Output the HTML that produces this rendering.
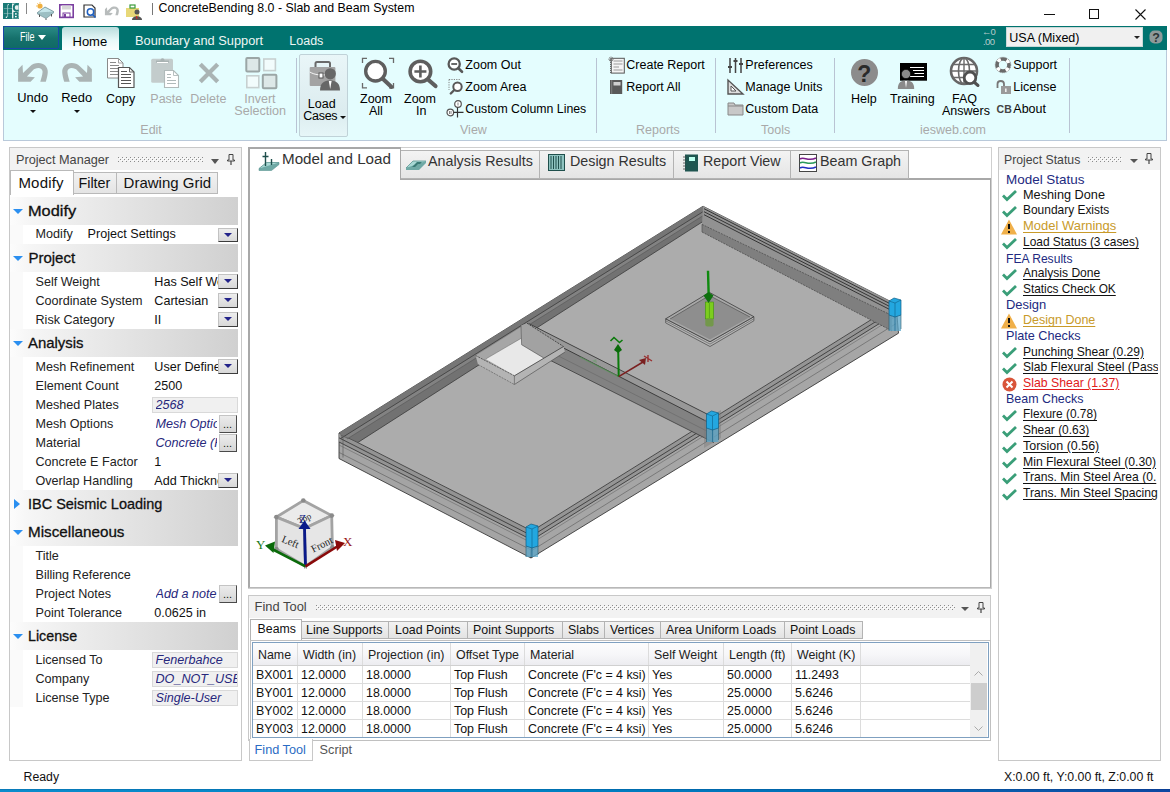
<!DOCTYPE html>
<html><head><meta charset="utf-8"><style>
html,body{margin:0;padding:0;}
body{width:1170px;height:792px;overflow:hidden;position:relative;background:#fff;font-family:"Liberation Sans",sans-serif;}
.t{position:absolute;white-space:nowrap;line-height:1;}
svg{overflow:visible}
</style></head><body>
<svg style="position:absolute;left:3px;top:3px;" width="16" height="16" viewBox="0 0 16 16"><rect x="0" y="0" width="16" height="16" fill="#1b7a77"/>
      <path d="M0.8 5.5H9M0.8 10.5H9" stroke="#8fc0bd" stroke-width="0.6"/><path d="M4.6 2V14" stroke="#b9d9d7" stroke-width="0.7"/>
      <path d="M9.5 0.5V15.5" stroke="#e6f0f0" stroke-width="1"/>
      <rect x="10" y="0.6" width="5.6" height="14.8" fill="#e8f0f0"/><path d="M15.6 1.6C13 0.4, 10.8 1.6, 10.8 4.5C10.8 7.4, 13 8.4, 15.6 7.4" fill="none" stroke="#1b7a77" stroke-width="2"/>
      <path d="M10.4 9H14.2C15.8 9, 15.8 11.8, 14.6 12C15.9 12.3, 15.8 15.4, 14.2 15.4H10.4Z" fill="#1b7a77"/><rect x="12" y="10.2" width="1.7" height="1.4" fill="#fff"/><rect x="12" y="12.9" width="1.7" height="1.4" fill="#fff"/>
      <circle cx="5.3" cy="1.6" r="0.6" fill="#fff"/><circle cx="3.4" cy="14.3" r="0.7" fill="#fff"/></svg>
<div style="position:absolute;left:26px;top:3px;width:1px;height:11px;background:#888"></div>
<svg style="position:absolute;left:36px;top:2px;" width="19" height="18" viewBox="0 0 19 18"><path d="M1.5 10.5L9 5L17.5 9.5L10 15Z" fill="#c5e6ea" stroke="#6a8a90" stroke-width="0.8"/>
      <path d="M1.5 10.5V12L10 16.5L17.5 11V9.5" fill="#9cbfc3" stroke="#6a8a90" stroke-width="0.6"/>
      <path d="M3.5 12.5V15M10 16.5V18M15.5 12V14.5" stroke="#555" stroke-width="1"/>
      <circle cx="4" cy="4" r="2.6" fill="#f0b040"/><path d="M4 0V1M0 4H1M1.3 1.3L2 2" stroke="#f0b040" stroke-width="0.8"/></svg>
<svg style="position:absolute;left:59px;top:4px;" width="15" height="14" viewBox="0 0 15 14"><rect x="0.8" y="0.8" width="13.4" height="12.6" fill="none" stroke="#7b3fa0" stroke-width="1.6"/>
      <rect x="3" y="1.5" width="9" height="4" fill="#d7d7d7"/>
      <rect x="4" y="9" width="7" height="4" fill="#fff" stroke="#7b3fa0" stroke-width="1"/><rect x="5" y="10" width="2" height="3" fill="#7b3fa0"/></svg>
<svg style="position:absolute;left:83px;top:4px;" width="14" height="14" viewBox="0 0 14 14"><path d="M1 1H9L12 4V13H1Z" fill="#fff" stroke="#333" stroke-width="1.2"/>
      <circle cx="7.5" cy="8" r="3.2" fill="none" stroke="#1f5fbf" stroke-width="1.5"/><path d="M9.5 10.5L12.5 13.5" stroke="#1f5fbf" stroke-width="1.6"/></svg>
<svg style="position:absolute;left:103px;top:4px;" width="17" height="13" viewBox="0 0 17 13"><g transform="scale(0.47)"><path d="M4.1 11.3 L8.5 6.7 L9 15 L15.9 8.5 C18.5 6, 21 5.1, 24.4 5.1 C30 5.1, 34 9, 33.8 14.1 C33.7 17, 32.8 20.5, 31.8 23.7 L26.3 23.7 C27.2 20.5, 28.4 17, 28.6 13.8 C28.6 11.5, 26.5 10.1, 24.4 10.1 C22 10.1, 20.2 11, 18.7 12.4 L12.9 18.4 L20.9 19.3 L16.6 23.7 L4.1 23.7 Z" fill="#b8bcbc"/></g></svg>
<svg style="position:absolute;left:126px;top:4px;" width="16" height="16" viewBox="0 0 16 16"><rect x="0" y="4" width="13" height="9" fill="#e8d878"/><rect x="4" y="1" width="5" height="3" fill="none" stroke="#3a9a3a" stroke-width="1.2"/>
      <circle cx="11" cy="8" r="2.5" fill="#555"/><path d="M6 16 C6 11, 16 11, 16 16Z" fill="#555"/><path d="M10.5 12 L11 15" stroke="#d22" stroke-width="1"/></svg>
<div style="position:absolute;left:152px;top:3px;width:1px;height:12px;background:#777"></div>
<div class="t" style="left:158.50px;top:2.15px;font-size:12.35px;color:#000;font-weight:400;font-style:normal;">ConcreteBending 8.0 - Slab and Beam System</div>
<div style="position:absolute;left:1044px;top:14px;width:11px;height:1px;background:#111"></div>
<div style="position:absolute;left:1089px;top:9px;width:10px;height:10px;border:1px solid #111;box-sizing:border-box"></div>
<svg style="position:absolute;left:1135px;top:9px;" width="11" height="11" viewBox="0 0 11 11"><path d="M0.5 0.5L10.5 10.5M10.5 0.5L0.5 10.5" stroke="#111" stroke-width="1.1"/></svg>
<div style="position:absolute;left:3px;top:26px;width:1164px;height:24px;background:#00736f"></div>
<div style="position:absolute;left:3px;top:26px;width:56px;height:23px;background:linear-gradient(#2a8b86,#15706b 55%,#0f6a66);border:1px solid #1a46a8;box-sizing:border-box;border-radius:2px"></div>
<div class="t" style="left:19.50px;top:31.22px;font-size:12.5px;color:#fff;font-weight:400;font-style:normal;transform:scaleX(0.72);transform-origin:left">File</div>
<svg style="position:absolute;left:38px;top:35px;" width="8" height="5" viewBox="0 0 8 5"><path d="M0 0H8L4 5Z" fill="#fff"/></svg>
<div style="position:absolute;left:62px;top:27px;width:57px;height:23px;background:linear-gradient(#b9dcdc,#eafafa 60%,#fafefe);border-radius:3px 3px 0 0"></div>
<div class="t" style="left:72.50px;top:34.60px;font-size:13px;color:#000;font-weight:400;font-style:normal;">Home</div>
<div class="t" style="left:135.00px;top:34.76px;font-size:12.8px;color:#eef6f4;font-weight:400;font-style:normal;">Boundary and Support</div>
<div class="t" style="left:289.30px;top:35.02px;font-size:12.5px;color:#eef6f4;font-weight:400;font-style:normal;">Loads</div>
<div class="t" style="left:982.00px;top:27.46px;font-size:9.5px;color:#b9cccc;font-weight:400;font-style:normal;letter-spacing:-1px">&#8592;0</div>
<div class="t" style="left:983.00px;top:36.96px;font-size:9.5px;color:#b9cccc;font-weight:400;font-style:normal;letter-spacing:-0.6px">.00</div>
<div style="position:absolute;left:1006px;top:27px;width:137px;height:20px;background:#f0f0f0;border:1px solid #c9d9d8;box-sizing:border-box"></div>
<div class="t" style="left:1009.30px;top:31.72px;font-size:12.5px;color:#000;font-weight:400;font-style:normal;">USA (Mixed)</div>
<svg style="position:absolute;left:1134px;top:36px;" width="6" height="3" viewBox="0 0 6 3"><path d="M0 0H6L3 3Z" fill="#222"/></svg>
<svg style="position:absolute;left:1149px;top:30px;" width="14" height="14" viewBox="0 0 14 14"><rect x="0.5" y="0.5" width="13" height="13" rx="5" fill="#8e9a9a"/><text x="3.2" y="11.8" font-size="12.5" font-weight="700" fill="#2a3434" font-family="Liberation Sans">?</text></svg>
<div style="position:absolute;left:3px;top:50px;width:1164px;height:91px;background:#e4fdfe;border:1px solid #b9c9da;border-top:none;box-sizing:border-box"></div>
<svg style="position:absolute;left:14px;top:58px;" width="40" height="28" viewBox="0 0 40 28"><path d="M4.1 11.3 L8.5 6.7 L9 15 L15.9 8.5 C18.5 6, 21 5.1, 24.4 5.1 C30 5.1, 34 9, 33.8 14.1 C33.7 17, 32.8 20.5, 31.8 23.7 L26.3 23.7 C27.2 20.5, 28.4 17, 28.6 13.8 C28.6 11.5, 26.5 10.1, 24.4 10.1 C22 10.1, 20.2 11, 18.7 12.4 L12.9 18.4 L20.9 19.3 L16.6 23.7 L4.1 23.7 Z" fill="#aab4b4"/></svg>
<div class="t" style="left:17.30px;top:92.28px;font-size:12.9px;color:#000;font-weight:400;font-style:normal;">Undo</div>
<svg style="position:absolute;left:30px;top:110px;" width="6" height="3" viewBox="0 0 6 3"><path d="M0 0H6L3 3Z" fill="#111"/></svg>
<svg style="position:absolute;left:58px;top:58px;" width="40" height="28" viewBox="0 0 40 28"><g transform="translate(38,0) scale(-1,1)"><path d="M4.1 11.3 L8.5 6.7 L9 15 L15.9 8.5 C18.5 6, 21 5.1, 24.4 5.1 C30 5.1, 34 9, 33.8 14.1 C33.7 17, 32.8 20.5, 31.8 23.7 L26.3 23.7 C27.2 20.5, 28.4 17, 28.6 13.8 C28.6 11.5, 26.5 10.1, 24.4 10.1 C22 10.1, 20.2 11, 18.7 12.4 L12.9 18.4 L20.9 19.3 L16.6 23.7 L4.1 23.7 Z" fill="#aab4b4"/></g></svg>
<div class="t" style="left:61.30px;top:92.28px;font-size:12.9px;color:#000;font-weight:400;font-style:normal;">Redo</div>
<svg style="position:absolute;left:74px;top:110px;" width="6" height="3" viewBox="0 0 6 3"><path d="M0 0H6L3 3Z" fill="#111"/></svg>
<svg style="position:absolute;left:107px;top:58px;" width="28" height="30" viewBox="0 0 28 30"><path d="M0.5 0.5H11.5L16 5V20H0.5Z" fill="#fff" stroke="#8a8a8a" stroke-width="1"/><path d="M11.5 0.5V5H16" fill="none" stroke="#8a8a8a" stroke-width="0.8"/>
      <path d="M3 4.5H9M3 7.5H12M3 10.5H12M3 13.5H12M3 16.5H12" stroke="#8a8a8a" stroke-width="1"/>
      <path d="M11.5 9.5H22.5L27 14V29.5H11.5Z" fill="#fff" stroke="#555" stroke-width="1.2"/><path d="M22.5 9.5V14H27" fill="none" stroke="#555" stroke-width="0.9"/>
      <path d="M14 13.5H20M14 16.5H24M14 19.5H24M14 22.5H24M14 25.5H24" stroke="#555" stroke-width="1.1"/></svg>
<div class="t" style="left:106.00px;top:92.62px;font-size:12.5px;color:#000;font-weight:400;font-style:normal;">Copy</div>
<svg style="position:absolute;left:151px;top:57px;" width="29" height="31" viewBox="0 0 29 31"><rect x="0.2" y="1.8" width="21.8" height="24" rx="1.5" fill="#c3cccc"/><path d="M5 5.5V3.5H9.5C9.5 0.5, 13.5 0.5, 13.5 3.5H18V5.5Z" fill="#a9b3b3"/><path d="M6 5.5H17" stroke="#fff" stroke-width="1"/>
      <path d="M13.5 13.5H22.5L27.5 18.5V30.5H13.5Z" fill="#fff" stroke="#b0baba" stroke-width="1.1"/><path d="M22.5 13.5V18.5H27.5" fill="none" stroke="#b0baba" stroke-width="0.9"/>
      <path d="M16 17.5H20M16 20.5H20M16 23.5H25M16 26.5H25" stroke="#b0baba" stroke-width="1"/></svg>
<div class="t" style="left:150.30px;top:92.62px;font-size:12.5px;color:#a9a9a9;font-weight:400;font-style:normal;">Paste</div>
<svg style="position:absolute;left:198px;top:62px;" width="22" height="22" viewBox="0 0 22 22"><path d="M2.3 2.3L19.7 19.7M19.7 2.3L2.3 19.7" stroke="#aab4b4" stroke-width="4.2"/></svg>
<div class="t" style="left:190.30px;top:92.62px;font-size:12.5px;color:#a9a9a9;font-weight:400;font-style:normal;">Delete</div>
<svg style="position:absolute;left:245px;top:57px;" width="33" height="33" viewBox="0 0 33 33"><rect x="1.3" y="1.1" width="13" height="13.5" rx="1" fill="#dde8e8" stroke="#9ba6a6" stroke-width="2"/><rect x="18.8" y="2" width="11.6" height="11.6" fill="#f2fcfc" stroke="#c7d0d0" stroke-width="1.6"/>
      <rect x="1.8" y="18.8" width="12" height="11.8" fill="#f2fcfc" stroke="#c7d0d0" stroke-width="1.6"/><rect x="17.8" y="17.8" width="13.6" height="13.5" rx="1" fill="#dde8e8" stroke="#9ba6a6" stroke-width="2"/></svg>
<div class="t" style="left:244.30px;top:92.62px;font-size:12.5px;color:#a9a9a9;font-weight:400;font-style:normal;">Invert</div>
<div class="t" style="left:234.30px;top:104.93px;font-size:12.6px;color:#a9a9a9;font-weight:400;font-style:normal;">Selection</div>
<div class="t" style="left:140.30px;top:123.62px;font-size:12.5px;color:#a9a9a9;font-weight:400;font-style:normal;">Edit</div>
<div style="position:absolute;left:296px;top:58px;width:1px;height:75px;background:#b9c3d3"></div>
<div style="position:absolute;left:299px;top:54px;width:49px;height:83px;background:linear-gradient(#e9f6f8,#dcecef 70%,#e6f6f8);border:1px solid #c0d2d8;box-sizing:border-box;border-radius:2px"></div>
<svg style="position:absolute;left:309px;top:61px;" width="32" height="30" viewBox="0 0 32 30"><path d="M6.5 6V2.5C6.5 1.5, 7 1, 8 1H19.5C20.5 1, 21 1.5, 21 2.5V6" fill="none" stroke="#6a6a6a" stroke-width="2"/>
      <rect x="0.7" y="6" width="25.7" height="19" rx="1" fill="#a3a3a3"/><path d="M0.7 11C6 14, 12 14.5, 18 13.5" fill="none" stroke="#fff" stroke-width="0.9"/>
      <rect x="10" y="12" width="4" height="5" fill="#fff" stroke="#555" stroke-width="1"/>
      <circle cx="21.3" cy="12.8" r="5.6" fill="#676767"/><path d="M11 29.5C11 22, 15 19.5, 21 19.5C27 19.5, 31 22, 31 29.5Z" fill="#676767"/><path d="M19.8 20L21.2 28L22.6 20Z" fill="#fff"/></svg>
<div class="t" style="left:307.80px;top:97.62px;font-size:12.5px;color:#000;font-weight:400;font-style:normal;">Load</div>
<div class="t" style="left:303.30px;top:110.22px;font-size:12.5px;color:#000;font-weight:400;font-style:normal;letter-spacing:-0.3px">Cases</div>
<svg style="position:absolute;left:340px;top:116px;" width="5" height="3" viewBox="0 0 5 3"><path d="M0 0H6L3 3Z" fill="#111"/></svg>
<svg style="position:absolute;left:361px;top:57px;" width="34" height="34" viewBox="0 0 34 34"><path d="M1.5 6V1.3H6M28 1.3H32.5V6M1.5 26V30.8H6M28 30.8H32.5V26" stroke="#6a6a6a" stroke-width="1.3" fill="none"/>
      <circle cx="14.5" cy="14.2" r="9.8" fill="#fff" stroke="#5e5e5e" stroke-width="3.4"/><path d="M21.5 21.5L30.5 30" stroke="#5e5e5e" stroke-width="4" stroke-linecap="round"/></svg>
<div class="t" style="left:360.00px;top:92.62px;font-size:12.5px;color:#000;font-weight:400;font-style:normal;">Zoom</div>
<div class="t" style="left:369.00px;top:105.02px;font-size:12.5px;color:#000;font-weight:400;font-style:normal;">All</div>
<svg style="position:absolute;left:406px;top:57px;" width="34" height="34" viewBox="0 0 34 34"><circle cx="14.4" cy="14.5" r="10.3" fill="#fff" stroke="#5e5e5e" stroke-width="3.6"/><path d="M14.4 8.5V20.5M8.4 14.5H20.4" stroke="#5e5e5e" stroke-width="2.6"/>
      <path d="M22 22.5L29.5 29" stroke="#5e5e5e" stroke-width="4.2" stroke-linecap="round"/></svg>
<div class="t" style="left:404.00px;top:92.62px;font-size:12.5px;color:#000;font-weight:400;font-style:normal;">Zoom</div>
<div class="t" style="left:416.00px;top:105.02px;font-size:12.5px;color:#000;font-weight:400;font-style:normal;">In</div>
<svg style="position:absolute;left:446px;top:56px;" width="18" height="18" viewBox="0 0 18 18"><circle cx="8.2" cy="8" r="5.6" fill="#fff" stroke="#585858" stroke-width="2.3"/><path d="M5.3 8H11.1" stroke="#585858" stroke-width="1.8"/><path d="M12.3 12.3L16 15.8" stroke="#585858" stroke-width="2.6" stroke-linecap="round"/></svg>
<div class="t" style="left:465.30px;top:59.02px;font-size:12.5px;color:#000;font-weight:400;font-style:normal;">Zoom Out</div>
<svg style="position:absolute;left:446px;top:78px;" width="18" height="18" viewBox="0 0 18 18"><path d="M3 1.5H15M3 1.5V12" stroke="#777" stroke-width="0.9" stroke-dasharray="1.2,1.2"/><circle cx="11.5" cy="8.7" r="4.2" fill="#fff" stroke="#585858" stroke-width="2"/><path d="M8.3 12L4.8 15.5" stroke="#585858" stroke-width="2.4" stroke-linecap="round"/></svg>
<div class="t" style="left:465.30px;top:81.02px;font-size:12.5px;color:#000;font-weight:400;font-style:normal;">Zoom Area</div>
<svg style="position:absolute;left:446px;top:99px;" width="19" height="19" viewBox="0 0 19 19"><circle cx="12" cy="5" r="3.3" fill="#fff" stroke="#555" stroke-width="1.2"/><circle cx="4.3" cy="13.5" r="3.3" fill="#fff" stroke="#555" stroke-width="1.2"/><path d="M11.5 8.5V18.5M7.5 13.3H17.5" stroke="#333" stroke-width="1.2"/><path d="M12 3.5V6.5M3.5 12V15M5 12V15" stroke="#666" stroke-width="0.8"/></svg>
<div class="t" style="left:465.30px;top:103.19px;font-size:12.3px;color:#000;font-weight:400;font-style:normal;">Custom Column Lines</div>
<div class="t" style="left:460.00px;top:123.62px;font-size:12.5px;color:#a9a9a9;font-weight:400;font-style:normal;">View</div>
<div style="position:absolute;left:596px;top:58px;width:1px;height:75px;background:#b9c3d3"></div>
<svg style="position:absolute;left:607px;top:56px;" width="19" height="19" viewBox="0 0 19 19"><rect x="4.3" y="2.3" width="13" height="14.8" fill="#f4f4f4" stroke="#555" stroke-width="1"/>
      <path d="M6.5 5H15.5M6.5 8H15.5M6.5 11H12M6.5 14H15.5" stroke="#b8b8b8" stroke-width="1.6"/>
      <path d="M3.5 4V17" stroke="#666" stroke-width="1" stroke-dasharray="1,1"/>
      <path d="M4 0.5V6M1.2 3.2H6.8M2 1.3L6 5M6 1.3L2 5" stroke="#777" stroke-width="0.8"/></svg>
<div class="t" style="left:626.30px;top:59.02px;font-size:12.5px;color:#000;font-weight:400;font-style:normal;">Create Report</div>
<svg style="position:absolute;left:609px;top:79px;" width="15" height="16" viewBox="0 0 15 16"><rect x="1" y="1" width="12.2" height="14" fill="#5a5a5a"/><path d="M2.7 1V15" stroke="#8a8a8a" stroke-width="0.8"/><rect x="4.5" y="3" width="7" height="3.5" fill="#cfcfcf"/></svg>
<div class="t" style="left:626.30px;top:81.02px;font-size:12.5px;color:#000;font-weight:400;font-style:normal;">Report All</div>
<div class="t" style="left:636.00px;top:123.62px;font-size:12.5px;color:#a9a9a9;font-weight:400;font-style:normal;">Reports</div>
<div style="position:absolute;left:715px;top:58px;width:1px;height:75px;background:#b9c3d3"></div>
<svg style="position:absolute;left:727px;top:57px;" width="17" height="17" viewBox="0 0 17 17"><path d="M3 1V16M8.5 1V16M14 1V16" stroke="#444" stroke-width="1.5"/><path d="M1 10H5M6.5 4H10.5M12 7H16" stroke="#444" stroke-width="2"/></svg>
<div class="t" style="left:745.30px;top:59.02px;font-size:12.5px;color:#000;font-weight:400;font-style:normal;">Preferences</div>
<svg style="position:absolute;left:727px;top:79px;" width="17" height="16" viewBox="0 0 17 16"><path d="M1 15V1L16 15Z" fill="#ddd" stroke="#555" stroke-width="1.4"/><path d="M4 12V7L9 12Z" fill="#fff" stroke="#555"/></svg>
<div class="t" style="left:745.30px;top:81.02px;font-size:12.5px;color:#000;font-weight:400;font-style:normal;">Manage Units</div>
<svg style="position:absolute;left:727px;top:101px;" width="17" height="15" viewBox="0 0 17 15"><path d="M1 2H7L8 4H16V14H1Z" fill="#c8c8c8" stroke="#888" stroke-width="1"/><path d="M1 5H16" stroke="#888"/></svg>
<div class="t" style="left:745.30px;top:103.02px;font-size:12.5px;color:#000;font-weight:400;font-style:normal;">Custom Data</div>
<div class="t" style="left:761.00px;top:123.62px;font-size:12.5px;color:#a9a9a9;font-weight:400;font-style:normal;">Tools</div>
<div style="position:absolute;left:834px;top:58px;width:1px;height:75px;background:#b9c3d3"></div>
<svg style="position:absolute;left:851px;top:59px;" width="27" height="27" viewBox="0 0 27 27"><circle cx="13.5" cy="13.5" r="13.5" fill="#8c8c8c"/><text x="6.3" y="22.5" font-size="23" font-weight="700" fill="#2a2a2a" font-family="Liberation Sans">?</text></svg>
<div class="t" style="left:851.00px;top:92.62px;font-size:12.5px;color:#000;font-weight:400;font-style:normal;">Help</div>
<svg style="position:absolute;left:897px;top:62px;" width="32" height="28" viewBox="0 0 32 28"><rect x="3" y="1" width="27" height="17.7" fill="#000"/><path d="M13 5.5H27M16 8.5H27M17.5 11.5H27M13 14.5H27" stroke="#fff" stroke-width="1.2"/>
      <circle cx="9" cy="12" r="4.6" fill="#8a8a8a" stroke="#000" stroke-width="0.6"/><path d="M0.8 27C0.8 20.5, 4 18.5, 9 18.5C14 18.5, 17.2 20.5, 17.2 27Z" fill="#8a8a8a"/><path d="M8 19L9 26L10 19Z" fill="#fff"/></svg>
<div class="t" style="left:890.00px;top:92.62px;font-size:12.5px;color:#000;font-weight:400;font-style:normal;">Training</div>
<svg style="position:absolute;left:949px;top:56px;" width="32" height="32" viewBox="0 0 32 32"><circle cx="15" cy="15" r="13" fill="#fff" stroke="#666" stroke-width="2.6"/><ellipse cx="15" cy="15" rx="5.5" ry="13" fill="none" stroke="#6a6a6a" stroke-width="1.6"/>
      <path d="M2 15H28M3.5 8.5H26.5M3.5 21.5H26.5M15 2V28" stroke="#6a6a6a" stroke-width="1.4"/><circle cx="21" cy="21.8" r="5.8" fill="#fff" stroke="#505050" stroke-width="2.8"/><path d="M25 26L29 29.5" stroke="#505050" stroke-width="3" stroke-linecap="round"/></svg>
<div class="t" style="left:952.00px;top:92.62px;font-size:12.5px;color:#000;font-weight:400;font-style:normal;">FAQ</div>
<div class="t" style="left:942.00px;top:105.02px;font-size:12.5px;color:#000;font-weight:400;font-style:normal;">Answers</div>
<div class="t" style="left:920.00px;top:123.62px;font-size:12.5px;color:#a9a9a9;font-weight:400;font-style:normal;">iesweb.com</div>
<svg style="position:absolute;left:994px;top:56px;" width="18" height="18" viewBox="0 0 18 18"><circle cx="9" cy="9" r="6" fill="none" stroke="#6a6a6a" stroke-width="3.6"/><circle cx="9" cy="9" r="6" fill="none" stroke="#fff" stroke-width="3.6" stroke-dasharray="3.4,6.02" stroke-dashoffset="-3.0"/><circle cx="9" cy="9" r="7.8" fill="none" stroke="#777" stroke-width="0.6" stroke-dasharray="1,1"/></svg>
<div class="t" style="left:1013.30px;top:59.02px;font-size:12.5px;color:#000;font-weight:400;font-style:normal;">Support</div>
<svg style="position:absolute;left:995px;top:78px;" width="18" height="18" viewBox="0 0 18 18"><path d="M2.5 10V6C2.5 2, 9 2, 9 6V8" fill="none" stroke="#777" stroke-width="1.8"/><rect x="6" y="8" width="10" height="8" fill="#9a9a9a"/><rect x="10" y="10.5" width="1.6" height="3.5" fill="#eee"/></svg>
<div class="t" style="left:1013.30px;top:81.02px;font-size:12.5px;color:#000;font-weight:400;font-style:normal;">License</div>
<div class="t" style="left:996.50px;top:104.11px;font-size:10.5px;color:#444;font-weight:700;font-style:normal;letter-spacing:0.2px">CB</div>
<div class="t" style="left:1013.30px;top:103.02px;font-size:12.5px;color:#000;font-weight:400;font-style:normal;">About</div>
<div style="position:absolute;left:1069px;top:58px;width:1px;height:75px;background:#b9c3d3"></div>
<div style="position:absolute;left:9px;top:147px;width:233px;height:614px;border:1px solid #c8c8c8;box-sizing:border-box;background:#fff"></div>
<div style="position:absolute;left:10px;top:148px;width:231px;height:22px;background:#f2f2f2"></div>
<div class="t" style="left:16.00px;top:153.75px;font-size:12.7px;color:#444;font-weight:400;font-style:normal;">Project Manager</div>
<svg style="position:absolute;left:118px;top:157px;" width="85" height="6" viewBox="0 0 85 6"><defs><pattern id="g118" width="4" height="4" patternUnits="userSpaceOnUse"><rect x="0" y="0" width="1" height="1" fill="#8c8c8c"/><rect x="1" y="1" width="1" height="1" fill="#fff"/><rect x="2" y="2" width="1" height="1" fill="#8c8c8c"/><rect x="3" y="3" width="1" height="1" fill="#fff"/></pattern></defs><rect width="85" height="5" fill="url(#g118)"/></svg>
<svg style="position:absolute;left:211px;top:159px;" width="8" height="5" viewBox="0 0 8 5"><path d="M0 0H8L4 5Z" fill="#555"/></svg>
<svg style="position:absolute;left:227px;top:154px;" width="8" height="11" viewBox="0 0 8 11"><path d="M2 0.5H6V6H7.5V7H0.5V6H2Z" fill="none" stroke="#444" stroke-width="1"/><path d="M4 7V11" stroke="#444" stroke-width="1.2"/></svg>
<div style="position:absolute;left:73px;top:172px;width:44px;height:22px;background:linear-gradient(#f2f2f2,#e4e4e4);border:1px solid #b9b9b9;box-sizing:border-box"></div>
<div style="position:absolute;left:116px;top:172px;width:102px;height:22px;background:linear-gradient(#f2f2f2,#e4e4e4);border:1px solid #b9b9b9;box-sizing:border-box"></div>
<div style="position:absolute;left:10px;top:170px;width:64px;height:25px;background:#fff;border:1px solid #b9b9b9;border-bottom:none;box-sizing:border-box"></div>
<div class="t" style="left:18.40px;top:174.50px;font-size:15px;color:#111;font-weight:400;font-style:normal;letter-spacing:0.2px">Modify</div>
<div class="t" style="left:78.40px;top:175.81px;font-size:14.4px;color:#111;font-weight:400;font-style:normal;">Filter</div>
<div class="t" style="left:123.60px;top:175.30px;font-size:15px;color:#111;font-weight:400;font-style:normal;">Drawing Grid</div>
<div style="position:absolute;left:10px;top:197px;width:228px;height:28px;background:linear-gradient(90deg,#fcfcfc 0%,#f6f6f6 8%,#ececec 30%,#dedede 65%,#d0d0d0 100%)"></div>
<svg style="position:absolute;left:13px;top:209px;" width="10" height="5" viewBox="0 0 10 5"><path d="M0 0H10L5 5Z" fill="#2b8ff0"/></svg>
<div class="t" style="left:28.40px;top:203.30px;font-size:15px;color:#111;font-weight:400;font-style:normal;-webkit-text-stroke:0.3px #111;transform:scaleX(1.09);transform-origin:left">Modify</div>
<div style="position:absolute;left:10px;top:225px;width:13px;height:19px;background:#fafafa"></div>
<div class="t" style="left:35.60px;top:228.13px;font-size:12.6px;color:#222;font-weight:400;font-style:normal;">Modify</div>
<div class="t" style="left:87.60px;top:228.13px;font-size:12.6px;color:#111;font-weight:400;font-style:normal;">Project Settings</div>
<div style="position:absolute;left:218px;top:228px;width:20px;height:14px;background:linear-gradient(#ededed,#d8d8d8);border:1px solid #c2c2c2;border-right-color:#3c3c3c;border-bottom-color:#3c3c3c;box-sizing:border-box"></div>
<svg style="position:absolute;left:224px;top:233px;" width="8" height="4" viewBox="0 0 8 4"><path d="M0 0H8L4 4Z" fill="#23238a"/></svg>
<div style="position:absolute;left:10px;top:244px;width:228px;height:28px;background:linear-gradient(90deg,#fcfcfc 0%,#f6f6f6 8%,#ececec 30%,#dedede 65%,#d0d0d0 100%)"></div>
<svg style="position:absolute;left:13px;top:256px;" width="10" height="5" viewBox="0 0 10 5"><path d="M0 0H10L5 5Z" fill="#2b8ff0"/></svg>
<div class="t" style="left:28.40px;top:250.30px;font-size:15px;color:#111;font-weight:400;font-style:normal;-webkit-text-stroke:0.3px #111;transform:scaleX(1.0);transform-origin:left">Project</div>
<div style="position:absolute;left:10px;top:272px;width:13px;height:19px;background:#fafafa"></div>
<div class="t" style="left:35.50px;top:276.03px;font-size:12.6px;color:#222;font-weight:400;font-style:normal;">Self Weight</div>
<div class="t" style="left:154.30px;top:276.03px;font-size:12.6px;color:#111;font-weight:400;font-style:normal;overflow:hidden;width:64px">Has Self Weight</div>
<div style="position:absolute;left:218px;top:274px;width:20px;height:15px;background:linear-gradient(#ededed,#d8d8d8);border:1px solid #c2c2c2;border-right-color:#3c3c3c;border-bottom-color:#3c3c3c;box-sizing:border-box"></div>
<svg style="position:absolute;left:224px;top:279px;" width="8" height="4" viewBox="0 0 8 4"><path d="M0 0H8L4 4Z" fill="#23238a"/></svg>
<div style="position:absolute;left:10px;top:291px;width:13px;height:19px;background:#fafafa"></div>
<div class="t" style="left:35.50px;top:295.03px;font-size:12.6px;color:#222;font-weight:400;font-style:normal;">Coordinate System</div>
<div class="t" style="left:154.30px;top:295.03px;font-size:12.6px;color:#111;font-weight:400;font-style:normal;overflow:hidden;width:64px">Cartesian</div>
<div style="position:absolute;left:218px;top:293px;width:20px;height:15px;background:linear-gradient(#ededed,#d8d8d8);border:1px solid #c2c2c2;border-right-color:#3c3c3c;border-bottom-color:#3c3c3c;box-sizing:border-box"></div>
<svg style="position:absolute;left:224px;top:298px;" width="8" height="4" viewBox="0 0 8 4"><path d="M0 0H8L4 4Z" fill="#23238a"/></svg>
<div style="position:absolute;left:10px;top:310px;width:13px;height:19px;background:#fafafa"></div>
<div class="t" style="left:35.50px;top:314.03px;font-size:12.6px;color:#222;font-weight:400;font-style:normal;">Risk Category</div>
<div class="t" style="left:154.30px;top:314.03px;font-size:12.6px;color:#111;font-weight:400;font-style:normal;overflow:hidden;width:64px">II</div>
<div style="position:absolute;left:218px;top:312px;width:20px;height:15px;background:linear-gradient(#ededed,#d8d8d8);border:1px solid #c2c2c2;border-right-color:#3c3c3c;border-bottom-color:#3c3c3c;box-sizing:border-box"></div>
<svg style="position:absolute;left:224px;top:317px;" width="8" height="4" viewBox="0 0 8 4"><path d="M0 0H8L4 4Z" fill="#23238a"/></svg>
<div style="position:absolute;left:10px;top:329px;width:228px;height:28px;background:linear-gradient(90deg,#fcfcfc 0%,#f6f6f6 8%,#ececec 30%,#dedede 65%,#d0d0d0 100%)"></div>
<svg style="position:absolute;left:13px;top:341px;" width="10" height="5" viewBox="0 0 10 5"><path d="M0 0H10L5 5Z" fill="#2b8ff0"/></svg>
<div class="t" style="left:28.40px;top:335.30px;font-size:15px;color:#111;font-weight:400;font-style:normal;-webkit-text-stroke:0.3px #111;transform:scaleX(0.995);transform-origin:left">Analysis</div>
<div style="position:absolute;left:10px;top:357px;width:13px;height:19px;background:#fafafa"></div>
<div class="t" style="left:35.50px;top:361.03px;font-size:12.6px;color:#222;font-weight:400;font-style:normal;">Mesh Refinement</div>
<div class="t" style="left:154.30px;top:361.03px;font-size:12.6px;color:#111;font-weight:400;font-style:normal;overflow:hidden;width:64px">User Defined</div>
<div style="position:absolute;left:218px;top:359px;width:20px;height:15px;background:linear-gradient(#ededed,#d8d8d8);border:1px solid #c2c2c2;border-right-color:#3c3c3c;border-bottom-color:#3c3c3c;box-sizing:border-box"></div>
<svg style="position:absolute;left:224px;top:364px;" width="8" height="4" viewBox="0 0 8 4"><path d="M0 0H8L4 4Z" fill="#23238a"/></svg>
<div style="position:absolute;left:10px;top:376px;width:13px;height:19px;background:#fafafa"></div>
<div class="t" style="left:35.50px;top:380.03px;font-size:12.6px;color:#222;font-weight:400;font-style:normal;">Element Count</div>
<div class="t" style="left:154.30px;top:380.03px;font-size:12.6px;color:#111;font-weight:400;font-style:normal;overflow:hidden;width:84px">2500</div>
<div style="position:absolute;left:10px;top:395px;width:13px;height:19px;background:#fafafa"></div>
<div class="t" style="left:35.50px;top:399.03px;font-size:12.6px;color:#222;font-weight:400;font-style:normal;">Meshed Plates</div>
<div style="position:absolute;left:152px;top:397px;width:86px;height:16px;background:#f0f0f0;border:1px solid #d9d9d9;box-sizing:border-box"></div>
<div class="t" style="left:155.50px;top:399.03px;font-size:12.6px;color:#27277c;font-weight:400;font-style:italic;overflow:hidden;width:81px">2568</div>
<div style="position:absolute;left:10px;top:414px;width:13px;height:19px;background:#fafafa"></div>
<div class="t" style="left:35.50px;top:418.03px;font-size:12.6px;color:#222;font-weight:400;font-style:normal;">Mesh Options</div>
<div class="t" style="left:155.50px;top:418.03px;font-size:12.6px;color:#27277c;font-weight:400;font-style:italic;overflow:hidden;width:61px">Mesh Options</div>
<div style="position:absolute;left:219px;top:414.5px;width:18px;height:18px;background:linear-gradient(#ececec,#d6d6d6);border:1px solid #c4c4c4;border-right-color:#4a4a4a;border-bottom-color:#4a4a4a;box-sizing:border-box"></div>
<div class="t" style="left:223.00px;top:418.69px;font-size:11px;color:#111;font-weight:400;font-style:normal;">...</div>
<div style="position:absolute;left:10px;top:433px;width:13px;height:19px;background:#fafafa"></div>
<div class="t" style="left:35.50px;top:437.03px;font-size:12.6px;color:#222;font-weight:400;font-style:normal;">Material</div>
<div class="t" style="left:155.50px;top:437.03px;font-size:12.6px;color:#27277c;font-weight:400;font-style:italic;overflow:hidden;width:61px">Concrete (F'c</div>
<div style="position:absolute;left:219px;top:433.5px;width:18px;height:18px;background:linear-gradient(#ececec,#d6d6d6);border:1px solid #c4c4c4;border-right-color:#4a4a4a;border-bottom-color:#4a4a4a;box-sizing:border-box"></div>
<div class="t" style="left:223.00px;top:437.69px;font-size:11px;color:#111;font-weight:400;font-style:normal;">...</div>
<div style="position:absolute;left:10px;top:452px;width:13px;height:19px;background:#fafafa"></div>
<div class="t" style="left:35.50px;top:456.03px;font-size:12.6px;color:#222;font-weight:400;font-style:normal;">Concrete E Factor</div>
<div class="t" style="left:154.30px;top:456.03px;font-size:12.6px;color:#111;font-weight:400;font-style:normal;overflow:hidden;width:84px">1</div>
<div style="position:absolute;left:10px;top:471px;width:13px;height:19px;background:#fafafa"></div>
<div class="t" style="left:35.50px;top:475.03px;font-size:12.6px;color:#222;font-weight:400;font-style:normal;">Overlap Handling</div>
<div class="t" style="left:154.30px;top:475.03px;font-size:12.6px;color:#111;font-weight:400;font-style:normal;overflow:hidden;width:64px">Add Thickness</div>
<div style="position:absolute;left:218px;top:473px;width:20px;height:15px;background:linear-gradient(#ededed,#d8d8d8);border:1px solid #c2c2c2;border-right-color:#3c3c3c;border-bottom-color:#3c3c3c;box-sizing:border-box"></div>
<svg style="position:absolute;left:224px;top:478px;" width="8" height="4" viewBox="0 0 8 4"><path d="M0 0H8L4 4Z" fill="#23238a"/></svg>
<div style="position:absolute;left:10px;top:490px;width:228px;height:28px;background:linear-gradient(90deg,#fcfcfc 0%,#f6f6f6 8%,#ececec 30%,#dedede 65%,#d0d0d0 100%)"></div>
<svg style="position:absolute;left:14px;top:499px;" width="6" height="10" viewBox="0 0 6 10"><path d="M0 0L6 5L0 10Z" fill="#2b8ff0"/></svg>
<div class="t" style="left:28.40px;top:496.30px;font-size:15px;color:#111;font-weight:400;font-style:normal;-webkit-text-stroke:0.3px #111;transform:scaleX(0.965);transform-origin:left">IBC Seismic Loading</div>
<div style="position:absolute;left:10px;top:518px;width:228px;height:28px;background:linear-gradient(90deg,#fcfcfc 0%,#f6f6f6 8%,#ececec 30%,#dedede 65%,#d0d0d0 100%)"></div>
<svg style="position:absolute;left:13px;top:530px;" width="10" height="5" viewBox="0 0 10 5"><path d="M0 0H10L5 5Z" fill="#2b8ff0"/></svg>
<div class="t" style="left:28.40px;top:524.30px;font-size:15px;color:#111;font-weight:400;font-style:normal;-webkit-text-stroke:0.3px #111;transform:scaleX(1.015);transform-origin:left">Miscellaneous</div>
<div style="position:absolute;left:10px;top:546px;width:13px;height:19px;background:#fafafa"></div>
<div class="t" style="left:35.50px;top:550.03px;font-size:12.6px;color:#222;font-weight:400;font-style:normal;">Title</div>
<div style="position:absolute;left:10px;top:565px;width:13px;height:19px;background:#fafafa"></div>
<div class="t" style="left:35.50px;top:569.03px;font-size:12.6px;color:#222;font-weight:400;font-style:normal;">Billing Reference</div>
<div style="position:absolute;left:10px;top:584px;width:13px;height:19px;background:#fafafa"></div>
<div class="t" style="left:35.50px;top:588.03px;font-size:12.6px;color:#222;font-weight:400;font-style:normal;">Project Notes</div>
<div class="t" style="left:155.50px;top:588.03px;font-size:12.6px;color:#27277c;font-weight:400;font-style:italic;overflow:hidden;width:61px">Add a note</div>
<div style="position:absolute;left:219px;top:584.5px;width:18px;height:18px;background:linear-gradient(#ececec,#d6d6d6);border:1px solid #c4c4c4;border-right-color:#4a4a4a;border-bottom-color:#4a4a4a;box-sizing:border-box"></div>
<div class="t" style="left:223.00px;top:588.69px;font-size:11px;color:#111;font-weight:400;font-style:normal;">...</div>
<div style="position:absolute;left:10px;top:603px;width:13px;height:19px;background:#fafafa"></div>
<div class="t" style="left:35.50px;top:607.03px;font-size:12.6px;color:#222;font-weight:400;font-style:normal;">Point Tolerance</div>
<div class="t" style="left:154.30px;top:607.03px;font-size:12.6px;color:#111;font-weight:400;font-style:normal;overflow:hidden;width:84px">0.0625 in</div>
<div style="position:absolute;left:10px;top:622px;width:228px;height:28px;background:linear-gradient(90deg,#fcfcfc 0%,#f6f6f6 8%,#ececec 30%,#dedede 65%,#d0d0d0 100%)"></div>
<svg style="position:absolute;left:13px;top:634px;" width="10" height="5" viewBox="0 0 10 5"><path d="M0 0H10L5 5Z" fill="#2b8ff0"/></svg>
<div class="t" style="left:28.40px;top:628.30px;font-size:15px;color:#111;font-weight:400;font-style:normal;-webkit-text-stroke:0.3px #111;transform:scaleX(0.95);transform-origin:left">License</div>
<div style="position:absolute;left:10px;top:650px;width:13px;height:19px;background:#fafafa"></div>
<div class="t" style="left:35.50px;top:654.03px;font-size:12.6px;color:#222;font-weight:400;font-style:normal;">Licensed To</div>
<div style="position:absolute;left:152px;top:652px;width:86px;height:16px;background:#f0f0f0;border:1px solid #d9d9d9;box-sizing:border-box"></div>
<div class="t" style="left:155.50px;top:654.03px;font-size:12.6px;color:#27277c;font-weight:400;font-style:italic;overflow:hidden;width:81px">Fenerbahce</div>
<div style="position:absolute;left:10px;top:669px;width:13px;height:19px;background:#fafafa"></div>
<div class="t" style="left:35.50px;top:673.03px;font-size:12.6px;color:#222;font-weight:400;font-style:normal;">Company</div>
<div style="position:absolute;left:152px;top:671px;width:86px;height:16px;background:#f0f0f0;border:1px solid #d9d9d9;box-sizing:border-box"></div>
<div class="t" style="left:155.50px;top:673.03px;font-size:12.6px;color:#27277c;font-weight:400;font-style:italic;overflow:hidden;width:81px">DO_NOT_USE_</div>
<div style="position:absolute;left:10px;top:688px;width:13px;height:19px;background:#fafafa"></div>
<div class="t" style="left:35.50px;top:692.03px;font-size:12.6px;color:#222;font-weight:400;font-style:normal;">License Type</div>
<div style="position:absolute;left:152px;top:690px;width:86px;height:16px;background:#f0f0f0;border:1px solid #d9d9d9;box-sizing:border-box"></div>
<div class="t" style="left:155.50px;top:692.03px;font-size:12.6px;color:#27277c;font-weight:400;font-style:italic;overflow:hidden;width:81px">Single-User</div>
<div style="position:absolute;left:248px;top:147px;width:744px;height:442px;border:1px solid #cfcfcf;box-sizing:border-box;background:#fff"></div>
<div style="position:absolute;left:248px;top:178px;width:743px;height:410px;border:2px solid #a8a8a8;border-right:1px solid #a8a8a8;border-bottom:1px solid #b8b8b8;box-sizing:border-box;background:#fff"></div>
<div style="position:absolute;left:400px;top:150px;width:140px;height:29px;background:linear-gradient(#f3f3f3,#e5e5e5);border:1px solid #b3b3b3;box-sizing:border-box"></div>
<div class="t" style="left:428.00px;top:153.90px;font-size:14.3px;color:#333;font-weight:400;font-style:normal;">Analysis Results</div>
<div style="position:absolute;left:539px;top:150px;width:135px;height:29px;background:linear-gradient(#f3f3f3,#e5e5e5);border:1px solid #b3b3b3;box-sizing:border-box"></div>
<div class="t" style="left:570.00px;top:153.90px;font-size:14.3px;color:#333;font-weight:400;font-style:normal;">Design Results</div>
<div style="position:absolute;left:673px;top:150px;width:118px;height:29px;background:linear-gradient(#f3f3f3,#e5e5e5);border:1px solid #b3b3b3;box-sizing:border-box"></div>
<div class="t" style="left:703.00px;top:153.90px;font-size:14.3px;color:#333;font-weight:400;font-style:normal;">Report View</div>
<div style="position:absolute;left:790px;top:150px;width:119px;height:29px;background:linear-gradient(#f3f3f3,#e5e5e5);border:1px solid #b3b3b3;box-sizing:border-box"></div>
<div class="t" style="left:820.00px;top:153.90px;font-size:14.3px;color:#333;font-weight:400;font-style:normal;">Beam Graph</div>
<div style="position:absolute;left:248px;top:147px;width:153px;height:33px;background:#fff;border:1px solid #a8a8a8;border-left:2px solid #a8a8a8;border-top:2px solid #a8a8a8;border-bottom:none;box-sizing:border-box"></div>
<div class="t" style="left:282.00px;top:151.43px;font-size:15.2px;color:#333;font-weight:400;font-style:normal;">Model and Load</div>
<svg style="position:absolute;left:258px;top:151px;" width="22" height="21" viewBox="0 0 22 21"><path d="M1 17.5L8.5 11.5H21L13.5 17.5Z" fill="#a8d8d4" stroke="#5a9490" stroke-width="0.8"/><path d="M1 17.5V19.5H13.5L21 13.5V11.5" fill="#6fa9a5" stroke="#5a9490" stroke-width="0.6"/>
      <path d="M7.5 1V15M4.5 5.5H10.5M13.5 8V14" stroke="#1f4f4c" stroke-width="1.4"/></svg>
<svg style="position:absolute;left:405px;top:158px;" width="22" height="13" viewBox="0 0 22 13"><path d="M1 10L8 3H21L14 10Z" fill="#a8d8d4" stroke="#5a9490" stroke-width="0.8"/><path d="M1 10V12H14L21 5V3" fill="#6fa9a5"/>
      <path d="M7 9L12 4H17L15 6H13L10 9Z" fill="#3a7a75"/></svg>
<svg style="position:absolute;left:548px;top:154px;" width="17" height="18" viewBox="0 0 17 18"><rect x="0.5" y="0.5" width="16" height="16" fill="#8ec3c0" stroke="#1f4f4c"/><path d="M3 2V15M5.5 2V15M8 2V15M10.5 2V15M13 2V15" stroke="#1f4f4c" stroke-width="1"/></svg>
<svg style="position:absolute;left:683px;top:154px;" width="16" height="19" viewBox="0 0 16 19"><rect x="2" y="0.5" width="13" height="17" fill="#1f5550"/><rect x="6" y="3" width="6" height="4" fill="#bfe"/><path d="M0 3H3M0 6H3M0 9H3M0 12H3M0 15H3" stroke="#444" stroke-width="0.8"/></svg>
<svg style="position:absolute;left:799px;top:154px;" width="18" height="18" viewBox="0 0 18 18"><rect x="0.5" y="0.5" width="17" height="17" fill="#fff" stroke="#444"/><path d="M1 5C5 2 9 8 17 4" stroke="#7a1f8a" stroke-width="1.6" fill="none"/><path d="M1 9C5 6 9 12 17 8" stroke="#2a9a5a" stroke-width="1.6" fill="none"/><path d="M1 14C5 11 9 17 17 13" stroke="#2030c0" stroke-width="1.6" fill="none"/></svg>
<svg style="position:absolute;left:0px;top:0px;pointer-events:none" width="1170" height="792" viewBox="0 0 1170 792"><polygon points="339.0,433.0 532.0,531.0 531.0,558.0 339.0,458.5" fill="#a4a4a4" stroke="#3a3a3a" stroke-width="0.9" /><polygon points="532.0,531.0 896.0,304.2 898.5,333.2 531.0,558.0" fill="#a6a6a6" stroke="#3a3a3a" stroke-width="0.9" /><polygon points="339.0,433.0 532.0,531.0 532.0,540.0 339.0,442.0" fill="#939393" stroke="none" stroke-width="0.8" /><polygon points="532.0,531.0 896.0,304.2 896.0,313.2 532.0,540.0" fill="#959595" stroke="none" stroke-width="0.8" /><line x1="339.0" y1="437.8" x2="532.0" y2="535.8" stroke="#3a3a3a" stroke-width="0.9" opacity="1"/><line x1="532.0" y1="535.8" x2="896.0" y2="309.0" stroke="#3a3a3a" stroke-width="0.9" opacity="1"/><line x1="339.0" y1="442.0" x2="532.0" y2="540.0" stroke="#3a3a3a" stroke-width="0.9" opacity="1"/><line x1="532.0" y1="540.0" x2="896.0" y2="313.2" stroke="#3a3a3a" stroke-width="0.9" opacity="1"/><line x1="339.0" y1="445.0" x2="532.0" y2="543.0" stroke="#6a6a6a" stroke-width="0.6" opacity="1"/><line x1="532.0" y1="543.0" x2="896.0" y2="316.2" stroke="#6a6a6a" stroke-width="0.6" opacity="1"/><line x1="339.0" y1="452.4" x2="532.0" y2="550.4" stroke="#5a5a5a" stroke-width="0.6" opacity="1"/><line x1="532.0" y1="550.4" x2="896.0" y2="323.6" stroke="#5a5a5a" stroke-width="0.6" opacity="1"/><line x1="343.0" y1="435.0" x2="343.0" y2="457.5" stroke="#555" stroke-width="0.6" opacity="1"/><polygon points="339.0,433.0 703.0,206.2 896.0,304.2 532.0,531.0" fill="#acacac" stroke="#3a3a3a" stroke-width="0.8" /><polygon points="339.0,433.0 703.0,206.2 704.0,220.8 358.3,442.2" fill="#727272" stroke="none" stroke-width="0.8" /><polygon points="341.0,432.3 704.0,206.1 704.0,211.1 341.0,438.3" fill="#767676" stroke="none" stroke-width="0.8" /><polygon points="343.0,437.0 704.0,211.1 704.0,215.1 347.0,439.0" fill="#828282" stroke="none" stroke-width="0.8" /><line x1="341.0" y1="438.3" x2="704.0" y2="211.1" stroke="#3a3a3a" stroke-width="0.8" opacity="1"/><line x1="347.0" y1="439.0" x2="704.0" y2="215.1" stroke="#555" stroke-width="0.6" opacity="1"/><line x1="358.3" y1="442.2" x2="704.0" y2="220.8" stroke="#3a3a3a" stroke-width="0.8" opacity="1"/><line x1="358.3" y1="442.2" x2="340.5" y2="435.0" stroke="#555" stroke-width="0.6" opacity="1"/><polygon points="703.0,206.2 896.0,304.2 891.8,315.4 702.0,224.4" fill="#929292" stroke="none" stroke-width="0.8" /><polygon points="702.0,224.4 891.8,315.4 891.8,330.8 702.0,232.0" fill="#7f7f7f" stroke="none" stroke-width="0.8" /><line x1="704.0" y1="208.7" x2="894.0" y2="305.7" stroke="#2a2a2a" stroke-width="0.9" opacity="1"/><line x1="704.0" y1="211.7" x2="894.0" y2="308.7" stroke="#2a2a2a" stroke-width="0.9" opacity="1"/><line x1="704.0" y1="214.7" x2="894.0" y2="311.7" stroke="#2a2a2a" stroke-width="0.9" opacity="1"/><line x1="702.0" y1="224.4" x2="891.8" y2="315.4" stroke="#444" stroke-width="0.7" opacity="1" stroke-dasharray="2,1"/><line x1="702.0" y1="232.0" x2="891.8" y2="330.8" stroke="#444" stroke-width="0.7" opacity="1" stroke-dasharray="2,1"/><line x1="702.0" y1="224.4" x2="702.0" y2="232.0" stroke="#555" stroke-width="0.7" opacity="1"/><polygon points="528.7,323.5 714.0,417.6 714.0,442.6 532.7,351.5" fill="#828282" stroke="none" stroke-width="0.8" /><polygon points="528.7,323.5 714.0,417.6 714.0,425.2 530.7,331.1" fill="#989898" stroke="none" stroke-width="0.8" /><line x1="528.7" y1="323.5" x2="714.0" y2="417.6" stroke="#3a3a3a" stroke-width="0.9" opacity="1"/><line x1="530.7" y1="331.1" x2="714.0" y2="425.2" stroke="#333" stroke-width="0.9" opacity="1"/><line x1="531.7" y1="342.5" x2="714.0" y2="434.6" stroke="#666" stroke-width="0.6" opacity="1"/><line x1="532.7" y1="351.5" x2="714.0" y2="442.6" stroke="#3a3a3a" stroke-width="0.8" opacity="1"/><polygon points="475.6,355.5 514.4,375.8 514.4,384.5 478.0,364.5" fill="#b4b4b4" stroke="none" stroke-width="0.8" /><polygon points="514.4,375.8 563.5,346.5 565.0,352.0 514.4,384.5" fill="#b4b4b4" stroke="none" stroke-width="0.8" /><line x1="478.0" y1="364.5" x2="514.4" y2="384.5" stroke="#555" stroke-width="0.6" opacity="1" stroke-dasharray="2,1"/><line x1="514.4" y1="384.5" x2="565.0" y2="352.0" stroke="#444" stroke-width="0.6" opacity="1"/><line x1="514.4" y1="375.8" x2="514.4" y2="384.5" stroke="#555" stroke-width="0.6" opacity="1"/><polygon points="475.6,355.5 527.0,323.2 563.5,346.5 514.4,375.8" fill="#a6a6a6" stroke="none" stroke-width="0.8" /><polygon points="521.0,325.6 527.0,323.2 563.5,346.5 543.8,358.0 521.6,344.7" fill="#a2a2a2" stroke="none" stroke-width="0.8" /><polygon points="485.7,359.0 521.0,338.4 521.6,344.7 543.8,358.0 514.4,375.5" fill="#e8e8e8" stroke="none" stroke-width="0.8" /><line x1="475.6" y1="355.5" x2="514.4" y2="375.8" stroke="#444" stroke-width="0.7" opacity="1" stroke-dasharray="2,1"/><line x1="514.4" y1="375.8" x2="563.5" y2="346.5" stroke="#333" stroke-width="0.7" opacity="1"/><line x1="527.0" y1="323.2" x2="563.5" y2="346.5" stroke="#333" stroke-width="0.8" opacity="1" stroke-dasharray="2,1"/><line x1="521.0" y1="325.6" x2="521.6" y2="344.7" stroke="#555" stroke-width="0.6" opacity="1"/><line x1="521.6" y1="344.7" x2="543.8" y2="358.0" stroke="#444" stroke-width="0.6" opacity="1"/><line x1="485.7" y1="359.0" x2="521.0" y2="338.4" stroke="#666" stroke-width="0.5" opacity="1"/><polygon points="665.7,318.8 710.0,341.7 753.9,316.7 753.9,320.8 710.0,346.5 665.7,322.9" fill="#b4b4b4" stroke="#444" stroke-width="0.7" /><line x1="665.7" y1="320.8" x2="710.0" y2="344.1" stroke="#555" stroke-width="0.6" opacity="1"/><line x1="710.0" y1="344.1" x2="753.9" y2="318.8" stroke="#555" stroke-width="0.6" opacity="1"/><polygon points="665.7,318.8 709.4,292.4 753.9,316.7 710.0,341.7" fill="#a8a8a8" stroke="#3a3a3a" stroke-width="0.8" /><polygon points="670.0,319.0 709.4,295.5 750.0,317.0 710.0,339.5" fill="#8e8e8e" stroke="none" stroke-width="0.8" /><line x1="670.0" y1="319.0" x2="709.4" y2="295.5" stroke="#444" stroke-width="0.6" opacity="1"/><line x1="709.4" y1="295.5" x2="750.0" y2="317.0" stroke="#444" stroke-width="0.6" opacity="1"/><rect x="705.3" y="302" width="8.3" height="17" fill="#7ccd1e" stroke="#3f8f10" stroke-width="0.6"/><rect x="705.3" y="318.5" width="8.3" height="8" rx="2" fill="#6f9a40" opacity="0.85"/><line x1="709.4" y1="303.0" x2="709.4" y2="318.0" stroke="#3f8f10" stroke-width="0.6" opacity="1"/><line x1="708.0" y1="270.8" x2="708.7" y2="296.0" stroke="#0f8a0f" stroke-width="2.4" opacity="1"/><path d="M703.5 295.5L708.6 292L713.5 295.5L708.6 303Z" fill="#0f700f"/><rect x="526" y="546" width="12" height="11" fill="#5aa6c8" opacity="0.75"/><path d="M526 527L531 524L538 526V546L532 548L526 546Z" fill="#23a7e0" stroke="#0f5f86" stroke-width="0.7"/><path d="M526 527L532 529L538 526M532 529V557" fill="none" stroke="#0f5f86" stroke-width="0.6"/><path d="M526 546V557M538 546V555" stroke="#2a5a70" stroke-width="0.6"/><polygon points="704.0,420.0 721.0,410.0 721.0,438.0 704.0,448.0" fill="#7a7a7a" stroke="none" stroke-width="0.8" opacity="0.45"/><rect x="706.5" y="428" width="12" height="14" fill="#5aa6c8" opacity="0.75"/><path d="M706.5 414L711.5 411L718.5 413V428L712.5 430L706.5 428Z" fill="#23a7e0" stroke="#0f5f86" stroke-width="0.7"/><path d="M706.5 414L712.5 416L718.5 413M712.5 416V442" fill="none" stroke="#0f5f86" stroke-width="0.6"/><path d="M706.5 428V442M718.5 428V440" stroke="#2a5a70" stroke-width="0.6"/><rect x="889" y="315" width="12" height="16" fill="#5aa6c8" opacity="0.75"/><path d="M889 301L894 298L901 300V315L895 317L889 315Z" fill="#23a7e0" stroke="#0f5f86" stroke-width="0.7"/><path d="M889 301L895 303L901 300M895 303V331" fill="none" stroke="#0f5f86" stroke-width="0.6"/><path d="M889 315V331M901 315V329" stroke="#2a5a70" stroke-width="0.6"/><line x1="618.7" y1="376.6" x2="580.0" y2="357.0" stroke="#5a9a5a" stroke-width="1.2" opacity="0.7"/><path d="M592 361l4 -2 1 4z" fill="#6a9a6a" opacity="0.6"/><line x1="618.7" y1="376.6" x2="618.2" y2="350.0" stroke="#0a7a0a" stroke-width="2" opacity="1"/><path d="M618 344L622 350L618 353L614 350Z" fill="#0a6a0a"/><path d="M610.5 341L614 337.5L619.5 342.5L622.5 340" fill="none" stroke="#0a7a0a" stroke-width="1.6"/><line x1="618.7" y1="376.6" x2="643.0" y2="362.0" stroke="#7a2020" stroke-width="1.6" opacity="1"/><path d="M639 360L646 358L645 365Z" fill="#7a2020"/><path d="M644 356L652 361M648 355L648 362" stroke="#9a3030" stroke-width="1.4"/></svg>
<svg style="position:absolute;left:0px;top:0px;pointer-events:none" width="1170" height="792" viewBox="0 0 1170 792"><polygon points="303.3,500.5 331.7,515.6 304.4,528.5 276.4,517.1" fill="#ebebeb" stroke="#a3a3a3" stroke-width="2.8" /><polygon points="276.4,517.1 304.4,528.5 305.5,566.4 276.4,549.0" fill="#e4e4e4" stroke="#a3a3a3" stroke-width="2.8" /><polygon points="304.4,528.5 331.7,515.6 332.4,547.4 305.5,566.4" fill="#e6e6e6" stroke="#a3a3a3" stroke-width="2.8" /><circle cx="303.3" cy="500.5" r="2.3" fill="#8a8a8a"/><circle cx="276.4" cy="517.1" r="2.3" fill="#8a8a8a"/><circle cx="331.7" cy="515.6" r="2.3" fill="#8a8a8a"/><circle cx="276.4" cy="549" r="2.3" fill="#8a8a8a"/><circle cx="332.4" cy="547.4" r="2.3" fill="#8a8a8a"/><text x="282" y="545" font-size="10.5" font-family="Liberation Serif" fill="#222" transform="rotate(22 290 541)">Left</text><text x="309" y="549" font-size="10.5" font-family="Liberation Serif" fill="#222" transform="rotate(-27 319 542)">Front</text><text x="297" y="521" font-size="9" font-family="Liberation Serif" fill="#222" transform="rotate(-28 305 517)">Top</text><text x="299" y="523" font-size="12" font-family="Liberation Serif" fill="#1a2a8a">Z</text><line x1="305.5" y1="566.4" x2="304.5" y2="527.0" stroke="#0a1a8a" stroke-width="2.8" opacity="1"/><path d="M304.5 520.5L298.5 529H310.5Z" fill="#0a1a8a"/><line x1="305.5" y1="566.4" x2="272.0" y2="549.0" stroke="#0a6a0a" stroke-width="2.6" opacity="1"/><path d="M265 545.5L275 541.5L273.5 553Z" fill="#0a6a0a"/><line x1="305.5" y1="566.4" x2="338.0" y2="546.0" stroke="#8a0a0a" stroke-width="2.6" opacity="1"/><path d="M345 543L335 540L337 551Z" fill="#8a0a0a"/><text x="256" y="549" font-size="13" font-family="Liberation Serif" fill="#1a7a1a">Y</text><text x="343" y="546" font-size="13" font-family="Liberation Serif" fill="#9a1a1a">X</text></svg>
<div style="position:absolute;left:248px;top:595px;width:743px;height:146px;border:1px solid #c8c8c8;box-sizing:border-box;background:#fff"></div>
<div style="position:absolute;left:249px;top:596px;width:741px;height:22px;background:#f2f2f2"></div>
<div class="t" style="left:254.60px;top:600.68px;font-size:12.9px;color:#444;font-weight:400;font-style:normal;">Find Tool</div>
<svg style="position:absolute;left:316px;top:605px;" width="639" height="6" viewBox="0 0 639 6"><defs><pattern id="g316" width="4" height="4" patternUnits="userSpaceOnUse"><rect x="0" y="0" width="1" height="1" fill="#8c8c8c"/><rect x="1" y="1" width="1" height="1" fill="#fff"/><rect x="2" y="2" width="1" height="1" fill="#8c8c8c"/><rect x="3" y="3" width="1" height="1" fill="#fff"/></pattern></defs><rect width="639" height="5" fill="url(#g316)"/></svg>
<svg style="position:absolute;left:961px;top:607px;" width="8" height="4" viewBox="0 0 8 4"><path d="M0 0H8L4 4Z" fill="#555"/></svg>
<svg style="position:absolute;left:977px;top:602px;" width="8" height="11" viewBox="0 0 8 11"><path d="M2 0.5H6V6H7.5V7H0.5V6H2Z" fill="none" stroke="#444" stroke-width="1"/><path d="M4 7V11" stroke="#444" stroke-width="1.2"/></svg>
<div style="position:absolute;left:301px;top:621px;width:88px;height:18px;background:linear-gradient(#f3f3f3,#e3e3e3);border:1px solid #b3b3b3;box-sizing:border-box"></div>
<div class="t" style="left:306.00px;top:623.50px;font-size:12.4px;color:#111;font-weight:400;font-style:normal;">Line Supports</div>
<div style="position:absolute;left:388px;top:621px;width:80px;height:18px;background:linear-gradient(#f3f3f3,#e3e3e3);border:1px solid #b3b3b3;box-sizing:border-box"></div>
<div class="t" style="left:395.00px;top:623.50px;font-size:12.4px;color:#111;font-weight:400;font-style:normal;">Load Points</div>
<div style="position:absolute;left:467px;top:621px;width:96px;height:18px;background:linear-gradient(#f3f3f3,#e3e3e3);border:1px solid #b3b3b3;box-sizing:border-box"></div>
<div class="t" style="left:473.00px;top:623.50px;font-size:12.4px;color:#111;font-weight:400;font-style:normal;">Point Supports</div>
<div style="position:absolute;left:562px;top:621px;width:43px;height:18px;background:linear-gradient(#f3f3f3,#e3e3e3);border:1px solid #b3b3b3;box-sizing:border-box"></div>
<div class="t" style="left:568.00px;top:623.50px;font-size:12.4px;color:#111;font-weight:400;font-style:normal;">Slabs</div>
<div style="position:absolute;left:604px;top:621px;width:57px;height:18px;background:linear-gradient(#f3f3f3,#e3e3e3);border:1px solid #b3b3b3;box-sizing:border-box"></div>
<div class="t" style="left:610.00px;top:623.50px;font-size:12.4px;color:#111;font-weight:400;font-style:normal;">Vertices</div>
<div style="position:absolute;left:660px;top:621px;width:125px;height:18px;background:linear-gradient(#f3f3f3,#e3e3e3);border:1px solid #b3b3b3;box-sizing:border-box"></div>
<div class="t" style="left:666.00px;top:623.50px;font-size:12.4px;color:#111;font-weight:400;font-style:normal;">Area Uniform Loads</div>
<div style="position:absolute;left:784px;top:621px;width:79px;height:18px;background:linear-gradient(#f3f3f3,#e3e3e3);border:1px solid #b3b3b3;box-sizing:border-box"></div>
<div class="t" style="left:790.00px;top:623.50px;font-size:12.4px;color:#111;font-weight:400;font-style:normal;">Point Loads</div>
<div style="position:absolute;left:250px;top:619px;width:52px;height:21px;background:#fff;border:1px solid #b3b3b3;border-bottom:none;box-sizing:border-box"></div>
<div class="t" style="left:257.60px;top:622.59px;font-size:12.3px;color:#111;font-weight:400;font-style:normal;">Beams</div>
<div style="position:absolute;left:250px;top:640px;width:741px;height:101px;border:1px solid #c0c0c0;box-sizing:border-box"></div>
<div style="position:absolute;left:252px;top:642px;width:737px;height:96px;border:1px solid #7fa0c0;box-sizing:border-box;background:#fff"></div>
<div style="position:absolute;left:253px;top:643px;width:717px;height:22px;background:linear-gradient(#fcfcfc 0%,#f7f7f9 50%,#ececf0 100%)"></div>
<div class="t" style="left:258.00px;top:648.50px;font-size:12.4px;color:#222;font-weight:400;font-style:normal;">Name</div>
<div class="t" style="left:303.00px;top:648.50px;font-size:12.4px;color:#222;font-weight:400;font-style:normal;">Width (in)</div>
<div class="t" style="left:368.00px;top:648.50px;font-size:12.4px;color:#222;font-weight:400;font-style:normal;">Projection (in)</div>
<div class="t" style="left:456.00px;top:648.50px;font-size:12.4px;color:#222;font-weight:400;font-style:normal;">Offset Type</div>
<div class="t" style="left:530.00px;top:648.50px;font-size:12.4px;color:#222;font-weight:400;font-style:normal;">Material</div>
<div class="t" style="left:654.00px;top:648.50px;font-size:12.4px;color:#222;font-weight:400;font-style:normal;">Self Weight</div>
<div class="t" style="left:729.00px;top:648.50px;font-size:12.4px;color:#222;font-weight:400;font-style:normal;">Length (ft)</div>
<div class="t" style="left:797.00px;top:648.50px;font-size:12.4px;color:#222;font-weight:400;font-style:normal;">Weight (K)</div>
<div style="position:absolute;left:297px;top:643px;width:1px;height:94px;background:#dcdcdc"></div>
<div style="position:absolute;left:362px;top:643px;width:1px;height:94px;background:#dcdcdc"></div>
<div style="position:absolute;left:450px;top:643px;width:1px;height:94px;background:#dcdcdc"></div>
<div style="position:absolute;left:524px;top:643px;width:1px;height:94px;background:#dcdcdc"></div>
<div style="position:absolute;left:648px;top:643px;width:1px;height:94px;background:#dcdcdc"></div>
<div style="position:absolute;left:723px;top:643px;width:1px;height:94px;background:#dcdcdc"></div>
<div style="position:absolute;left:791px;top:643px;width:1px;height:94px;background:#dcdcdc"></div>
<div style="position:absolute;left:860px;top:643px;width:1px;height:94px;background:#dcdcdc"></div>
<div style="position:absolute;left:253px;top:665px;width:717px;height:1px;background:#d0d0d0"></div>
<div class="t" style="left:256.00px;top:668.50px;font-size:12.4px;color:#111;font-weight:400;font-style:normal;">BX001</div>
<div class="t" style="left:301.00px;top:668.50px;font-size:12.4px;color:#111;font-weight:400;font-style:normal;">12.0000</div>
<div class="t" style="left:366.00px;top:668.50px;font-size:12.4px;color:#111;font-weight:400;font-style:normal;">18.0000</div>
<div class="t" style="left:454.00px;top:668.50px;font-size:12.4px;color:#111;font-weight:400;font-style:normal;">Top Flush</div>
<div class="t" style="left:528.00px;top:668.50px;font-size:12.4px;color:#111;font-weight:400;font-style:normal;">Concrete (F'c = 4 ksi)</div>
<div class="t" style="left:652.00px;top:668.50px;font-size:12.4px;color:#111;font-weight:400;font-style:normal;">Yes</div>
<div class="t" style="left:727.00px;top:668.50px;font-size:12.4px;color:#111;font-weight:400;font-style:normal;">50.0000</div>
<div class="t" style="left:795.00px;top:668.50px;font-size:12.4px;color:#111;font-weight:400;font-style:normal;">11.2493</div>
<div style="position:absolute;left:253px;top:683px;width:717px;height:1px;background:#dcdcdc"></div>
<div class="t" style="left:256.00px;top:686.50px;font-size:12.4px;color:#111;font-weight:400;font-style:normal;">BY001</div>
<div class="t" style="left:301.00px;top:686.50px;font-size:12.4px;color:#111;font-weight:400;font-style:normal;">12.0000</div>
<div class="t" style="left:366.00px;top:686.50px;font-size:12.4px;color:#111;font-weight:400;font-style:normal;">18.0000</div>
<div class="t" style="left:454.00px;top:686.50px;font-size:12.4px;color:#111;font-weight:400;font-style:normal;">Top Flush</div>
<div class="t" style="left:528.00px;top:686.50px;font-size:12.4px;color:#111;font-weight:400;font-style:normal;">Concrete (F'c = 4 ksi)</div>
<div class="t" style="left:652.00px;top:686.50px;font-size:12.4px;color:#111;font-weight:400;font-style:normal;">Yes</div>
<div class="t" style="left:727.00px;top:686.50px;font-size:12.4px;color:#111;font-weight:400;font-style:normal;">25.0000</div>
<div class="t" style="left:795.00px;top:686.50px;font-size:12.4px;color:#111;font-weight:400;font-style:normal;">5.6246</div>
<div style="position:absolute;left:253px;top:701px;width:717px;height:1px;background:#dcdcdc"></div>
<div class="t" style="left:256.00px;top:704.50px;font-size:12.4px;color:#111;font-weight:400;font-style:normal;">BY002</div>
<div class="t" style="left:301.00px;top:704.50px;font-size:12.4px;color:#111;font-weight:400;font-style:normal;">12.0000</div>
<div class="t" style="left:366.00px;top:704.50px;font-size:12.4px;color:#111;font-weight:400;font-style:normal;">18.0000</div>
<div class="t" style="left:454.00px;top:704.50px;font-size:12.4px;color:#111;font-weight:400;font-style:normal;">Top Flush</div>
<div class="t" style="left:528.00px;top:704.50px;font-size:12.4px;color:#111;font-weight:400;font-style:normal;">Concrete (F'c = 4 ksi)</div>
<div class="t" style="left:652.00px;top:704.50px;font-size:12.4px;color:#111;font-weight:400;font-style:normal;">Yes</div>
<div class="t" style="left:727.00px;top:704.50px;font-size:12.4px;color:#111;font-weight:400;font-style:normal;">25.0000</div>
<div class="t" style="left:795.00px;top:704.50px;font-size:12.4px;color:#111;font-weight:400;font-style:normal;">5.6246</div>
<div style="position:absolute;left:253px;top:719px;width:717px;height:1px;background:#dcdcdc"></div>
<div class="t" style="left:256.00px;top:722.50px;font-size:12.4px;color:#111;font-weight:400;font-style:normal;">BY003</div>
<div class="t" style="left:301.00px;top:722.50px;font-size:12.4px;color:#111;font-weight:400;font-style:normal;">12.0000</div>
<div class="t" style="left:366.00px;top:722.50px;font-size:12.4px;color:#111;font-weight:400;font-style:normal;">18.0000</div>
<div class="t" style="left:454.00px;top:722.50px;font-size:12.4px;color:#111;font-weight:400;font-style:normal;">Top Flush</div>
<div class="t" style="left:528.00px;top:722.50px;font-size:12.4px;color:#111;font-weight:400;font-style:normal;">Concrete (F'c = 4 ksi)</div>
<div class="t" style="left:652.00px;top:722.50px;font-size:12.4px;color:#111;font-weight:400;font-style:normal;">Yes</div>
<div class="t" style="left:727.00px;top:722.50px;font-size:12.4px;color:#111;font-weight:400;font-style:normal;">25.0000</div>
<div class="t" style="left:795.00px;top:722.50px;font-size:12.4px;color:#111;font-weight:400;font-style:normal;">5.6246</div>
<div style="position:absolute;left:970px;top:643px;width:17px;height:94px;background:#f0f0f0"></div>
<div style="position:absolute;left:971px;top:683px;width:16px;height:27px;background:#cdcdcd"></div>
<svg style="position:absolute;left:974px;top:671px;" width="9" height="5" viewBox="0 0 9 5"><path d="M0.5 4.5L4.5 0.5L8.5 4.5" fill="none" stroke="#aaa" stroke-width="1"/></svg>
<svg style="position:absolute;left:974px;top:726px;" width="9" height="5" viewBox="0 0 9 5"><path d="M0.5 0.5L4.5 4.5L8.5 0.5" fill="none" stroke="#aaa" stroke-width="1"/></svg>
<div style="position:absolute;left:249px;top:739px;width:64px;height:22px;background:#fff;border:1px solid #c8c8c8;border-top:none;box-sizing:border-box"></div>
<div class="t" style="left:254.60px;top:744.25px;font-size:12.7px;color:#2b6cc4;font-weight:400;font-style:normal;">Find Tool</div>
<div class="t" style="left:319.60px;top:744.25px;font-size:12.7px;color:#555;font-weight:400;font-style:normal;">Script</div>
<div style="position:absolute;left:998px;top:147px;width:163px;height:614px;border:1px solid #c8c8c8;box-sizing:border-box;background:#fff"></div>
<div style="position:absolute;left:999px;top:148px;width:161px;height:22px;background:#f2f2f2"></div>
<div class="t" style="left:1004.00px;top:154.33px;font-size:12.25px;color:#444;font-weight:400;font-style:normal;">Project Status</div>
<svg style="position:absolute;left:1088px;top:157px;" width="34" height="6" viewBox="0 0 34 6"><defs><pattern id="g1088" width="4" height="4" patternUnits="userSpaceOnUse"><rect x="0" y="0" width="1" height="1" fill="#8c8c8c"/><rect x="1" y="1" width="1" height="1" fill="#fff"/><rect x="2" y="2" width="1" height="1" fill="#8c8c8c"/><rect x="3" y="3" width="1" height="1" fill="#fff"/></pattern></defs><rect width="34" height="5" fill="url(#g1088)"/></svg>
<svg style="position:absolute;left:1130px;top:159px;" width="8" height="4" viewBox="0 0 8 4"><path d="M0 0H8L4 4Z" fill="#555"/></svg>
<svg style="position:absolute;left:1145px;top:153px;" width="8" height="11" viewBox="0 0 8 11"><path d="M2 0.5H6V6H7.5V7H0.5V6H2Z" fill="none" stroke="#444" stroke-width="1"/><path d="M4 7V11" stroke="#444" stroke-width="1.2"/></svg>
<div style="position:absolute;left:0;top:0;width:1158px;height:792px;overflow:hidden">
<div class="t" style="left:1006.20px;top:172.73px;font-size:13.2px;color:#222a80;font-weight:400;font-style:normal;transform:scaleX(1.02);transform-origin:left;">Model Status</div>
<svg style="position:absolute;left:1002px;top:190.3px;" width="15" height="11" viewBox="0 0 15 11"><path d="M1 5.5L5 9.5L14 1" fill="none" stroke="#3a9e78" stroke-width="2.8"/></svg>
<div class="t" style="left:1022.50px;top:188.63px;font-size:12.6px;color:#111;font-weight:400;font-style:normal;transform:scaleX(1.01);transform-origin:left;">Meshing Done</div>
<svg style="position:absolute;left:1002px;top:206.0px;" width="15" height="11" viewBox="0 0 15 11"><path d="M1 5.5L5 9.5L14 1" fill="none" stroke="#3a9e78" stroke-width="2.8"/></svg>
<div class="t" style="left:1022.50px;top:204.33px;font-size:12.6px;color:#111;font-weight:400;font-style:normal;transform:scaleX(0.948);transform-origin:left;">Boundary Exists</div>
<svg style="position:absolute;left:1001px;top:218.9px;" width="16" height="16" viewBox="0 0 16 16"><path d="M8 0.5L16 15.5H0Z" fill="#f0b04a"/><path d="M8 5V10" stroke="#111" stroke-width="2"/><rect x="7" y="12" width="2" height="2" fill="#111"/></svg>
<div class="t" style="left:1022.50px;top:220.23px;font-size:12.6px;color:#c89a2a;font-weight:400;font-style:normal;text-decoration:underline;text-underline-offset:2px;transform:scaleX(1.03);transform-origin:left;">Model Warnings</div>
<svg style="position:absolute;left:1002px;top:238.0px;" width="15" height="11" viewBox="0 0 15 11"><path d="M1 5.5L5 9.5L14 1" fill="none" stroke="#3a9e78" stroke-width="2.8"/></svg>
<div class="t" style="left:1022.50px;top:236.33px;font-size:12.6px;color:#111;font-weight:400;font-style:normal;text-decoration:underline;text-underline-offset:2px;transform:scaleX(0.946);transform-origin:left;">Load Status (3 cases)</div>
<div class="t" style="left:1006.20px;top:251.53px;font-size:13.2px;color:#222a80;font-weight:400;font-style:normal;transform:scaleX(0.916);transform-origin:left;">FEA Results</div>
<svg style="position:absolute;left:1002px;top:269.1px;" width="15" height="11" viewBox="0 0 15 11"><path d="M1 5.5L5 9.5L14 1" fill="none" stroke="#3a9e78" stroke-width="2.8"/></svg>
<div class="t" style="left:1022.50px;top:267.43px;font-size:12.6px;color:#111;font-weight:400;font-style:normal;text-decoration:underline;text-underline-offset:2px;transform:scaleX(0.96);transform-origin:left;">Analysis Done</div>
<svg style="position:absolute;left:1002px;top:284.8px;" width="15" height="11" viewBox="0 0 15 11"><path d="M1 5.5L5 9.5L14 1" fill="none" stroke="#3a9e78" stroke-width="2.8"/></svg>
<div class="t" style="left:1022.50px;top:283.13px;font-size:12.6px;color:#111;font-weight:400;font-style:normal;text-decoration:underline;text-underline-offset:2px;transform:scaleX(0.94);transform-origin:left;">Statics Check OK</div>
<div class="t" style="left:1006.20px;top:298.03px;font-size:13.2px;color:#222a80;font-weight:400;font-style:normal;transform:scaleX(0.98);transform-origin:left;">Design</div>
<svg style="position:absolute;left:1001px;top:312.9px;" width="16" height="16" viewBox="0 0 16 16"><path d="M8 0.5L16 15.5H0Z" fill="#f0b04a"/><path d="M8 5V10" stroke="#111" stroke-width="2"/><rect x="7" y="12" width="2" height="2" fill="#111"/></svg>
<div class="t" style="left:1022.50px;top:314.23px;font-size:12.6px;color:#c89a2a;font-weight:400;font-style:normal;text-decoration:underline;text-underline-offset:2px;transform:scaleX(0.993);transform-origin:left;">Design Done</div>
<div class="t" style="left:1006.20px;top:329.43px;font-size:13.2px;color:#222a80;font-weight:400;font-style:normal;transform:scaleX(0.96);transform-origin:left;">Plate Checks</div>
<svg style="position:absolute;left:1002px;top:347.3px;" width="15" height="11" viewBox="0 0 15 11"><path d="M1 5.5L5 9.5L14 1" fill="none" stroke="#3a9e78" stroke-width="2.8"/></svg>
<div class="t" style="left:1022.50px;top:345.63px;font-size:12.6px;color:#111;font-weight:400;font-style:normal;text-decoration:underline;text-underline-offset:2px;transform:scaleX(0.96);transform-origin:left;">Punching Shear (0.29)</div>
<svg style="position:absolute;left:1002px;top:363.0px;" width="15" height="11" viewBox="0 0 15 11"><path d="M1 5.5L5 9.5L14 1" fill="none" stroke="#3a9e78" stroke-width="2.8"/></svg>
<div class="t" style="left:1022.50px;top:361.33px;font-size:12.6px;color:#111;font-weight:400;font-style:normal;text-decoration:underline;text-underline-offset:2px;transform:scaleX(0.96);transform-origin:left;">Slab Flexural Steel (Pass)</div>
<svg style="position:absolute;left:1002px;top:376.7px;" width="15" height="15" viewBox="0 0 15 15"><circle cx="7.5" cy="7.5" r="7" fill="#d9553a"/><path d="M4.5 4.5L10.5 10.5M10.5 4.5L4.5 10.5" stroke="#fff" stroke-width="2"/></svg>
<div class="t" style="left:1022.50px;top:377.03px;font-size:12.6px;color:#e02020;font-weight:400;font-style:normal;text-decoration:underline;text-underline-offset:2px;transform:scaleX(0.976);transform-origin:left;">Slab Shear (1.37)</div>
<div class="t" style="left:1006.20px;top:392.23px;font-size:13.2px;color:#222a80;font-weight:400;font-style:normal;transform:scaleX(0.943);transform-origin:left;">Beam Checks</div>
<svg style="position:absolute;left:1002px;top:410.1px;" width="15" height="11" viewBox="0 0 15 11"><path d="M1 5.5L5 9.5L14 1" fill="none" stroke="#3a9e78" stroke-width="2.8"/></svg>
<div class="t" style="left:1022.50px;top:408.43px;font-size:12.6px;color:#111;font-weight:400;font-style:normal;text-decoration:underline;text-underline-offset:2px;transform:scaleX(0.944);transform-origin:left;">Flexure (0.78)</div>
<svg style="position:absolute;left:1002px;top:425.8px;" width="15" height="11" viewBox="0 0 15 11"><path d="M1 5.5L5 9.5L14 1" fill="none" stroke="#3a9e78" stroke-width="2.8"/></svg>
<div class="t" style="left:1022.50px;top:424.13px;font-size:12.6px;color:#111;font-weight:400;font-style:normal;text-decoration:underline;text-underline-offset:2px;transform:scaleX(0.947);transform-origin:left;">Shear (0.63)</div>
<svg style="position:absolute;left:1002px;top:441.5px;" width="15" height="11" viewBox="0 0 15 11"><path d="M1 5.5L5 9.5L14 1" fill="none" stroke="#3a9e78" stroke-width="2.8"/></svg>
<div class="t" style="left:1022.50px;top:439.83px;font-size:12.6px;color:#111;font-weight:400;font-style:normal;text-decoration:underline;text-underline-offset:2px;transform:scaleX(0.99);transform-origin:left;">Torsion (0.56)</div>
<svg style="position:absolute;left:1002px;top:457.2px;" width="15" height="11" viewBox="0 0 15 11"><path d="M1 5.5L5 9.5L14 1" fill="none" stroke="#3a9e78" stroke-width="2.8"/></svg>
<div class="t" style="left:1022.50px;top:455.53px;font-size:12.6px;color:#111;font-weight:400;font-style:normal;text-decoration:underline;text-underline-offset:2px;transform:scaleX(0.97);transform-origin:left;">Min Flexural Steel (0.30)</div>
<svg style="position:absolute;left:1002px;top:472.9px;" width="15" height="11" viewBox="0 0 15 11"><path d="M1 5.5L5 9.5L14 1" fill="none" stroke="#3a9e78" stroke-width="2.8"/></svg>
<div class="t" style="left:1022.50px;top:471.23px;font-size:12.6px;color:#111;font-weight:400;font-style:normal;text-decoration:underline;text-underline-offset:2px;transform:scaleX(0.96);transform-origin:left;">Trans. Min Steel Area (0.</div>
<svg style="position:absolute;left:1002px;top:488.6px;" width="15" height="11" viewBox="0 0 15 11"><path d="M1 5.5L5 9.5L14 1" fill="none" stroke="#3a9e78" stroke-width="2.8"/></svg>
<div class="t" style="left:1022.50px;top:486.93px;font-size:12.6px;color:#111;font-weight:400;font-style:normal;text-decoration:underline;text-underline-offset:2px;transform:scaleX(0.96);transform-origin:left;">Trans. Min Steel Spacing</div>
</div>
<div class="t" style="left:23.50px;top:770.59px;font-size:12.3px;color:#111;font-weight:400;font-style:normal;">Ready</div>
<div class="t" style="left:1004.00px;top:770.59px;font-size:12.3px;color:#111;font-weight:400;font-style:normal;">X:0.00 ft, Y:0.00 ft, Z:0.00 ft</div>
<div style="position:absolute;left:0px;top:789px;width:1170px;height:3px;background:linear-gradient(90deg,#0b8ccc 0%,#0082c3 45%,#0070b8 70%,#0a58aa 88%,#0c47a2 100%)"></div>
<div style="position:absolute;left:0px;top:789px;width:1170px;height:1px;background:rgba(0,0,60,0.12)"></div>
</body></html>
